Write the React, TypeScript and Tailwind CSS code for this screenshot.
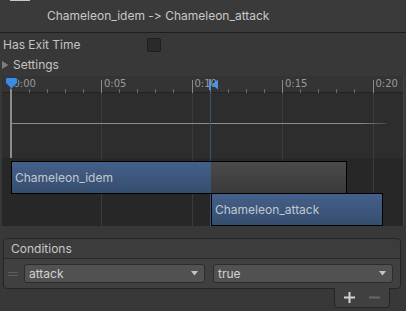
import React from "react";

const majors = [
  { x: 10.5, label: "0:00" },
  { x: 101, label: "0:05" },
  { x: 191.5, label: "0:10" },
  { x: 282, label: "0:15" },
  { x: 372.5, label: "0:20" },
];

const minors: number[] = [];
for (let k = 1; k < 21; k++) {
  if (k % 5 !== 0) minors.push(10.5 + 18.1 * k);
}

function Timeline() {
  // timeline canvas placed at page x=2, y=76; items use panel-relative coordinates
  const ox = 2;
  const oy = 76;
  return (
    <div className="relative mx-[2px] flex h-[150px] flex-col overflow-hidden border-r border-[#444] bg-[#2d2d2d]">
      <div className="h-[17px] shrink-0 border-b border-[#222] bg-[#343434]" />
      <div className="h-[65px] shrink-0" />
      <div className="flex-1 bg-[#272727]" />
      {/* major grid lines */}
      {majors.slice(1).map((m) => (
        <div
          key={"g" + m.label}
          className="absolute top-[17px] h-[133px] w-px bg-[#3b3b3b]"
          style={{ left: m.x - ox }}
        />
      ))}
      {/* major ticks + labels */}
      {majors.map((m) => (
        <div key={m.label} className="absolute top-[4px] flex h-[13px] items-start" style={{ left: m.x - ox }}>
          <div className="h-[13px] w-px bg-[#8a8a8a]" />
          <div
            className="-mt-[2px] ml-[2px] text-[10px] leading-[12px] text-[#9a9a9a]"
            style={{ fontFamily: '"DejaVu Sans", sans-serif' }}
          >
            {m.label}
          </div>
        </div>
      ))}
      {minors.map((x) => (
        <div key={x} className="absolute top-[13px] h-[4px] w-px bg-[#6a6a6a]" style={{ left: x - ox }} />
      ))}
      {/* curve line */}
      <div
        className="absolute h-px"
        style={{
          left: 11 - ox,
          top: 123 - oy,
          width: 375,
          background: "linear-gradient(to right, #8c8c8c 0%, #8c8c8c 93%, #4a4a4a 100%)",
        }}
      />
      {/* transition line */}
      <div className="absolute top-[17px] h-[133px] w-px bg-[#34547c]" style={{ left: 210 - ox }} />
      {/* idem bar */}
      <div
        className="absolute flex border border-black"
        style={{ left: 11 - ox, top: 161 - oy, width: 336, height: 33 }}
      >
        <div className="flex h-full w-[199px] items-center bg-gradient-to-b from-[#44608a] to-[#364d6e] pl-[3px] text-[12px] text-[#c2c8d0]">
          Chameleon_idem
        </div>
        <div className="h-full flex-1 bg-gradient-to-b from-[#4a4a4a] to-[#3a3a3a]" />
      </div>
      {/* attack bar */}
      <div
        className="absolute flex items-center border border-black bg-gradient-to-b from-[#44608a] to-[#364d6e] pl-[3px] text-[12px] text-[#c2c8d0]"
        style={{ left: 211 - ox, top: 193 - oy, width: 172, height: 33 }}
      >
        Chameleon_attack
      </div>
      {/* playhead line */}
      <div className="absolute w-[2px] bg-[#8c8c8c]" style={{ left: 10 - ox, top: 88 - oy, height: 70 }} />
      {/* start marker */}
      <svg className="absolute" style={{ left: 4 - ox, top: 77 - oy }} width="15" height="13" viewBox="0 0 15 13">
        <path d="M1.5 2.5 Q1.5 0.5 3.5 0.5 H11.5 Q13.5 0.5 13.5 2.5 V6 L7.5 12 L1.5 6 Z" fill="#3d8ae0" stroke="#1c3a60" strokeWidth="1" />
      </svg>
      {/* end marker */}
      <svg className="absolute" style={{ left: 208 - ox, top: 79 - oy }} width="11" height="11" viewBox="0 0 11 11">
        <rect x="1" y="0" width="2" height="11" fill="#4a93e6" />
        <path d="M10 0.5 L4 5.5 L10 10.5 Z" fill="#4a93e6" />
      </svg>
    </div>
  );
}

function Dropdown({ label, className }: { label: string; className: string }) {
  return (
    <div
      className={
        "flex h-[19px] items-center justify-between rounded-[3px] border border-[#2c2c2c] bg-[#515151] pl-[4px] pr-[6px] text-[12px] text-[#d2d2d2] " +
        className
      }
    >
      <span>{label}</span>
      <svg width="7" height="5" viewBox="0 0 7 5">
        <path d="M0 0 H7 L3.5 4.5 Z" fill="#c4c4c4" />
      </svg>
    </div>
  );
}

export default function App() {
  return (
    <div
      className="h-[311px] w-[406px] overflow-hidden bg-[#383838] text-[12px] text-[#c4c4c4] [font-feature-settings:'calt'_0,'liga'_0]"
      style={{ fontFamily: "Inter, 'Noto Sans', sans-serif" }}
    >
      {/* header */}
      <div className="flex h-[33px] flex-col border-b border-[#1e1e1e] bg-[#3a3a3a]">
        <div className="ml-[10px] h-[1px] w-[20px] bg-[#c8c8c8]" />
        <div className="ml-[47px] mt-[7px] leading-[16px] text-[#c8c8c8]">Chameleon_idem -&gt; Chameleon_attack</div>
      </div>
      {/* has exit time */}
      <div className="mt-[3px] flex h-[18px] items-center pl-[3px]">
        <span className="w-[144px]">Has Exit Time</span>
        <div className="h-[14px] w-[14px] rounded-[2px] border border-[#1f1f1f] bg-[#2a2a2a]" />
      </div>
      {/* settings */}
      <div className="mt-[2px] flex h-[18px] items-center pl-[2px]">
        <svg width="7" height="8" viewBox="0 0 7 8" className="mr-[4px]">
          <path d="M0 0 L6.5 4 L0 8 Z" fill="#7c7c7c" />
        </svg>
        <span>Settings</span>
      </div>
      <div className="h-[2px]" />
      <Timeline />
      {/* conditions */}
      <div className="mx-[3px] mt-[12px] w-[398px] rounded-[4px] border border-[#252525]">
        <div className="flex h-[20px] items-center rounded-t-[4px] border-b border-[#2a2a2a] bg-[#3c3c3c] pl-[7px] text-[#c8c8c8]">
          Conditions
        </div>
        <div className="flex h-[29px] items-center rounded-b-[4px] bg-[#404040] pl-[4px]">
          <div className="mr-[6px] flex w-[10px] flex-col gap-[2px]">
            <div className="h-px bg-[#5e5e5e]" />
            <div className="h-px bg-[#5e5e5e]" />
          </div>
          <Dropdown label="attack" className="w-[181px]" />
          <Dropdown label="true" className="ml-[8px] w-[180px]" />
        </div>
      </div>
      <div className="flex justify-end pr-[16px]">
        <div className="-mt-px flex h-[20px] w-[56px] items-center gap-[14px] rounded-b-[4px] border border-t-0 border-[#252525] bg-[#404040] pl-[9px]">
          <svg width="11" height="11" viewBox="0 0 11 11">
            <rect x="0" y="4.5" width="11" height="2" fill="#d4d4d4" />
            <rect x="4.5" y="0" width="2" height="11" fill="#d4d4d4" />
          </svg>
          <svg width="11" height="11" viewBox="0 0 11 11">
            <rect x="0" y="4.5" width="11" height="2" fill="#686868" />
          </svg>
        </div>
      </div>
    </div>
  );
}
